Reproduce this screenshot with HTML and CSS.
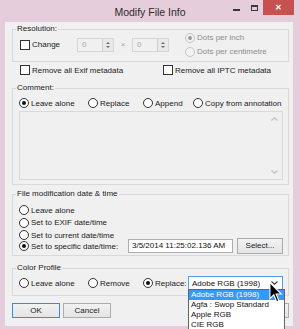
FILE: index.html
```html
<!DOCTYPE html>
<html lang="en">
<head>
  <meta charset="UTF-8">
  <title>Modify File Info</title>
  <link rel="stylesheet" href="styles.css">
</head>
<body>
  <div class="window">
    <div class="titlebar">
      <div class="title">Modify File Info</div>
      <div class="caption">
        <div class="cap-btn cap-min"><span class="min-glyph"></span></div>
        <div class="cap-btn cap-max"><span class="max-glyph"></span></div>
        <div class="cap-btn cap-close">&#x2715;</div>
      </div>
    </div>

    <div class="client">
      <!-- resolution -->
      <div class="group res">
        <div class="group-title">Resolution:</div>
        <div class="item change"><span class="box"></span>Change</div>
        <div class="spin"><span class="spin-val">0</span><span class="spin-arrows"><i class="up"></i><i class="down"></i></span></div>
        <div class="times">&times;</div>
        <div class="spin"><span class="spin-val">0</span><span class="spin-arrows"><i class="up"></i><i class="down"></i></span></div>
        <div class="dots">
          <div class="item off"><span class="radio on"></span>Dots per inch</div>
          <div class="item off"><span class="radio"></span>Dots per centimetre</div>
        </div>
      </div>

      <div class="meta">
        <div class="item exif"><span class="box"></span>Remove all Exif metadata</div>
        <div class="item"><span class="box"></span>Remove all IPTC metadata</div>
      </div>

      <!-- comment -->
      <div class="group comment">
        <div class="group-title">Comment:</div>
        <div class="line">
          <div class="item col-1"><span class="radio on"></span>Leave alone</div>
          <div class="item col-2"><span class="radio"></span>Replace</div>
          <div class="item col-3"><span class="radio"></span>Append</div>
          <div class="item"><span class="radio"></span>Copy from annotation</div>
        </div>
        <div class="memo">
          <div class="vscroll">
            <svg width="7" height="4" viewBox="0 0 7 4"><path d="M0.5 3.5 L3.5 0.8 L6.5 3.5" fill="none" stroke="#c2c2c2" stroke-width="1.2"/></svg>
            <svg width="7" height="4" viewBox="0 0 7 4"><path d="M0.5 0.5 L3.5 3.2 L6.5 0.5" fill="none" stroke="#c2c2c2" stroke-width="1.2"/></svg>
          </div>
        </div>
      </div>

      <!-- file date -->
      <div class="group filedate">
        <div class="group-title">File modification date &amp; time</div>
        <div class="line"><div class="item"><span class="radio"></span>Leave alone</div></div>
        <div class="line tall"><div class="item"><span class="radio"></span>Set to EXIF date/time</div></div>
        <div class="line"><div class="item"><span class="radio"></span>Set to current date/time</div></div>
        <div class="line date-line">
          <div class="item specific"><span class="radio on"></span>Set to specific date/time:</div>
          <div class="datefield">3/5/2014 11:25:02.136 AM</div>
          <div class="btn select">Select...</div>
        </div>
      </div>

      <!-- colour profile -->
      <div class="group profile">
        <div class="group-title">Color Profile</div>
        <div class="line combo-line">
          <div class="item col-1"><span class="radio"></span>Leave alone</div>
          <div class="item col-2"><span class="radio"></span>Remove</div>
          <div class="item col-4"><span class="radio on"></span>Replace:</div>
          <div class="combo">
            <span>Adobe RGB (1998)</span>
            <svg class="combo-arrow" width="7" height="4" viewBox="0 0 7 4"><path d="M0.5 0.5 L3.5 3.2 L6.5 0.5" fill="none" stroke="#444" stroke-width="1.2"/></svg>
            <ul class="combo-list">
              <li class="sel">Adobe RGB (1998)</li>
              <li>Agfa : Swop Standard</li>
              <li>Apple RGB</li>
              <li>CIE RGB</li>
            </ul>
          </div>
        </div>
      </div>

      <div class="buttons">
        <div class="btn default">OK</div>
        <div class="btn">Cancel</div>
        <!-- third button sits under the open list -->
        <div class="btn hidden-btn"></div>
      </div>
    </div>

    <svg class="cursor" width="14" height="21" viewBox="0 0 12 19">
      <path d="M0.5 0.5 L0.5 15 L4 11.6 L6.6 17.8 L8.6 17 L6.1 10.9 L10.8 10.9 Z" fill="#000" stroke="#fff" stroke-width="1"/>
    </svg>
  </div>
</body>
</html>
```

FILE: styles.css
```css
body {
  margin: 0;
  font-family: "Liberation Sans", Arial, sans-serif;
  font-size: 8px;
  color: #1a1a1a;
}
.window {
  width: 300px;
  height: 329px;
  background: #e6cddb;
  display: flex;
  flex-direction: column;
  position: relative;
  overflow: hidden;
}
.titlebar {
  height: 22px;
  display: grid;
  grid-template-columns: 1fr auto 1fr;
}
.title {
  grid-column: 2;
  font-size: 10.5px;
  line-height: 22px;
  padding-top: 1px;
  color: #2b2b2b;
}
.caption {
  grid-column: 3;
  justify-self: end;
  display: flex;
  margin-right: 6px;
}
.cap-btn {
  width: 18px;
  height: 15px;
  display: flex;
  justify-content: center;
}
.min-glyph {
  width: 7px;
  height: 2px;
  margin-top: 9px;
  background: #3a3a3a;
}
.max-glyph {
  width: 7px;
  height: 6px;
  margin-top: 5px;
  box-sizing: border-box;
  border: 1px solid #3a3a3a;
  border-top-width: 2px;
}
.cap-close {
  width: 31px;
  background: #c75050;
  color: #fff;
  font-size: 8px;
  font-weight: bold;
  line-height: 15px;
}
.client {
  flex: 1;
  margin: 0 7px 3px 5px;
  padding: 0 4px 0 7px;
  background: #f0f0f0;
}
.group {
  position: relative;
  box-sizing: border-box;
  border: 1px solid #d9d9d9;
}
.group-title {
  position: absolute;
  top: -6px;
  left: 3px;
  padding: 0 1px;
  line-height: 10px;
  background: #f0f0f0;
}
.item {
  display: flex;
  align-items: center;
  white-space: nowrap;
}
.box {
  width: 10px;
  height: 10px;
  box-sizing: border-box;
  border: 1px solid #333;
  background: #fff;
  margin-right: 2px;
}
.radio {
  width: 10px;
  height: 10px;
  box-sizing: border-box;
  border: 1px solid #333;
  border-radius: 50%;
  background: #fff;
  margin-right: 2px;
  display: flex;
  align-items: center;
  justify-content: center;
}
.radio.on::after {
  content: "";
  width: 4px;
  height: 4px;
  border-radius: 50%;
  background: #111;
}
.off {
  color: #8d8d8d;
}
.off .radio {
  border-color: #c4c4c4;
  background: #f2f2f2;
}
.off .radio.on::after {
  background: #9a9a9a;
}

/* resolution */
.res {
  margin-top: 7px;
  height: 33px;
  display: flex;
  align-items: center;
  padding: 0 0 2px 7px;
}
.change {
  width: 57px;
}
.spin {
  width: 37px;
  height: 14px;
  box-sizing: border-box;
  border: 1px solid #d6d6d6;
  background: #f0f0f0;
  display: flex;
}
.spin-val {
  flex: 1;
  padding-left: 4px;
  line-height: 12px;
  color: #a6a6a6;
}
.spin-arrows {
  width: 10px;
  border-left: 1px solid #d0d0d0;
  background: #e9e9e9;
  display: flex;
  flex-direction: column;
  align-items: center;
  justify-content: center;
  gap: 2px;
}
.spin-arrows i {
  width: 0;
  height: 0;
  border-left: 2px solid transparent;
  border-right: 2px solid transparent;
}
.spin-arrows .up {
  border-bottom: 2px solid #6f6f6f;
}
.spin-arrows .down {
  border-top: 2px solid #6f6f6f;
}
.times {
  width: 18px;
  text-align: center;
  color: #a6a6a6;
}
.dots {
  margin-left: 16px;
}
.dots .item {
  height: 14px;
}

/* metadata checkboxes */
.meta {
  margin-top: 2px;
  height: 12px;
  display: flex;
  align-items: center;
  padding-left: 8px;
}
.exif {
  width: 143px;
}

/* shared rows */
.line {
  height: 12px;
  display: flex;
  align-items: center;
}
.line.tall {
  height: 13px;
}
.col-1 { width: 69px; }
.col-2 { width: 55px; }
.col-3 { width: 50px; }
.col-4 { width: 45px; }

/* comment */
.comment {
  margin-top: 12px;
  height: 97px;
  padding: 8px 0 0 6px;
}
.memo {
  margin-top: 2px;
  width: 264px;
  height: 69px;
  box-sizing: border-box;
  border: 1px solid #d9d9d9;
  background: #f0f0f0;
  display: flex;
  justify-content: flex-end;
}
.vscroll {
  width: 15px;
  display: flex;
  flex-direction: column;
  align-items: center;
  justify-content: space-between;
  padding: 5px 0;
}

/* file date */
.filedate {
  margin-top: 9px;
  height: 62px;
  padding: 9px 0 0 6px;
}
.date-line {
  height: 16px;
  margin-top: -3px;
}
.specific {
  width: 109px;
}
.datefield {
  width: 105px;
  height: 14px;
  box-sizing: border-box;
  border: 1px solid #abadb3;
  background: #fff;
  padding-left: 3px;
  line-height: 12px;
  color: #111;
}
.btn {
  height: 15px;
  box-sizing: border-box;
  border: 1px solid #acacac;
  background: linear-gradient(#f2f2f2, #e4e4e4);
  text-align: center;
  line-height: 13px;
}
.select {
  width: 46px;
  height: 16px;
  line-height: 14px;
  margin-left: 4px;
}

/* colour profile */
.profile {
  margin-top: 12px;
  height: 28px;
  padding: 7px 0 0 6px;
}
.combo-line {
  height: 14px;
}
.combo {
  position: relative;
  width: 95px;
  height: 14px;
  box-sizing: border-box;
  border: 1px solid #569de5;
  background: #fff;
  padding-left: 3px;
  display: flex;
  align-items: center;
  justify-content: space-between;
  color: #111;
}
.combo-arrow {
  margin-right: 4px;
}
.combo-list {
  position: absolute;
  top: 12px;
  left: -1px;
  width: 95px;
  margin: 0;
  padding: 0;
  list-style: none;
  border: 1px solid #646464;
  background: #fff;
  z-index: 2;
}
.combo-list li {
  height: 10px;
  line-height: 10px;
  padding-left: 2px;
  color: #111;
}
.combo-list .sel {
  background: #3399ff;
  color: #fff;
}

/* buttons */
.buttons {
  margin-top: 7px;
  display: flex;
}
.buttons .btn {
  width: 48px;
}
.buttons .btn + .btn {
  margin-left: 3px;
}
.btn.default {
  border-color: #3c8ad8;
}
.buttons .btn.hidden-btn {
  margin-left: auto;
  width: 52px;
}

.cursor {
  position: absolute;
  left: 269px;
  top: 282px;
  z-index: 3;
}
```
